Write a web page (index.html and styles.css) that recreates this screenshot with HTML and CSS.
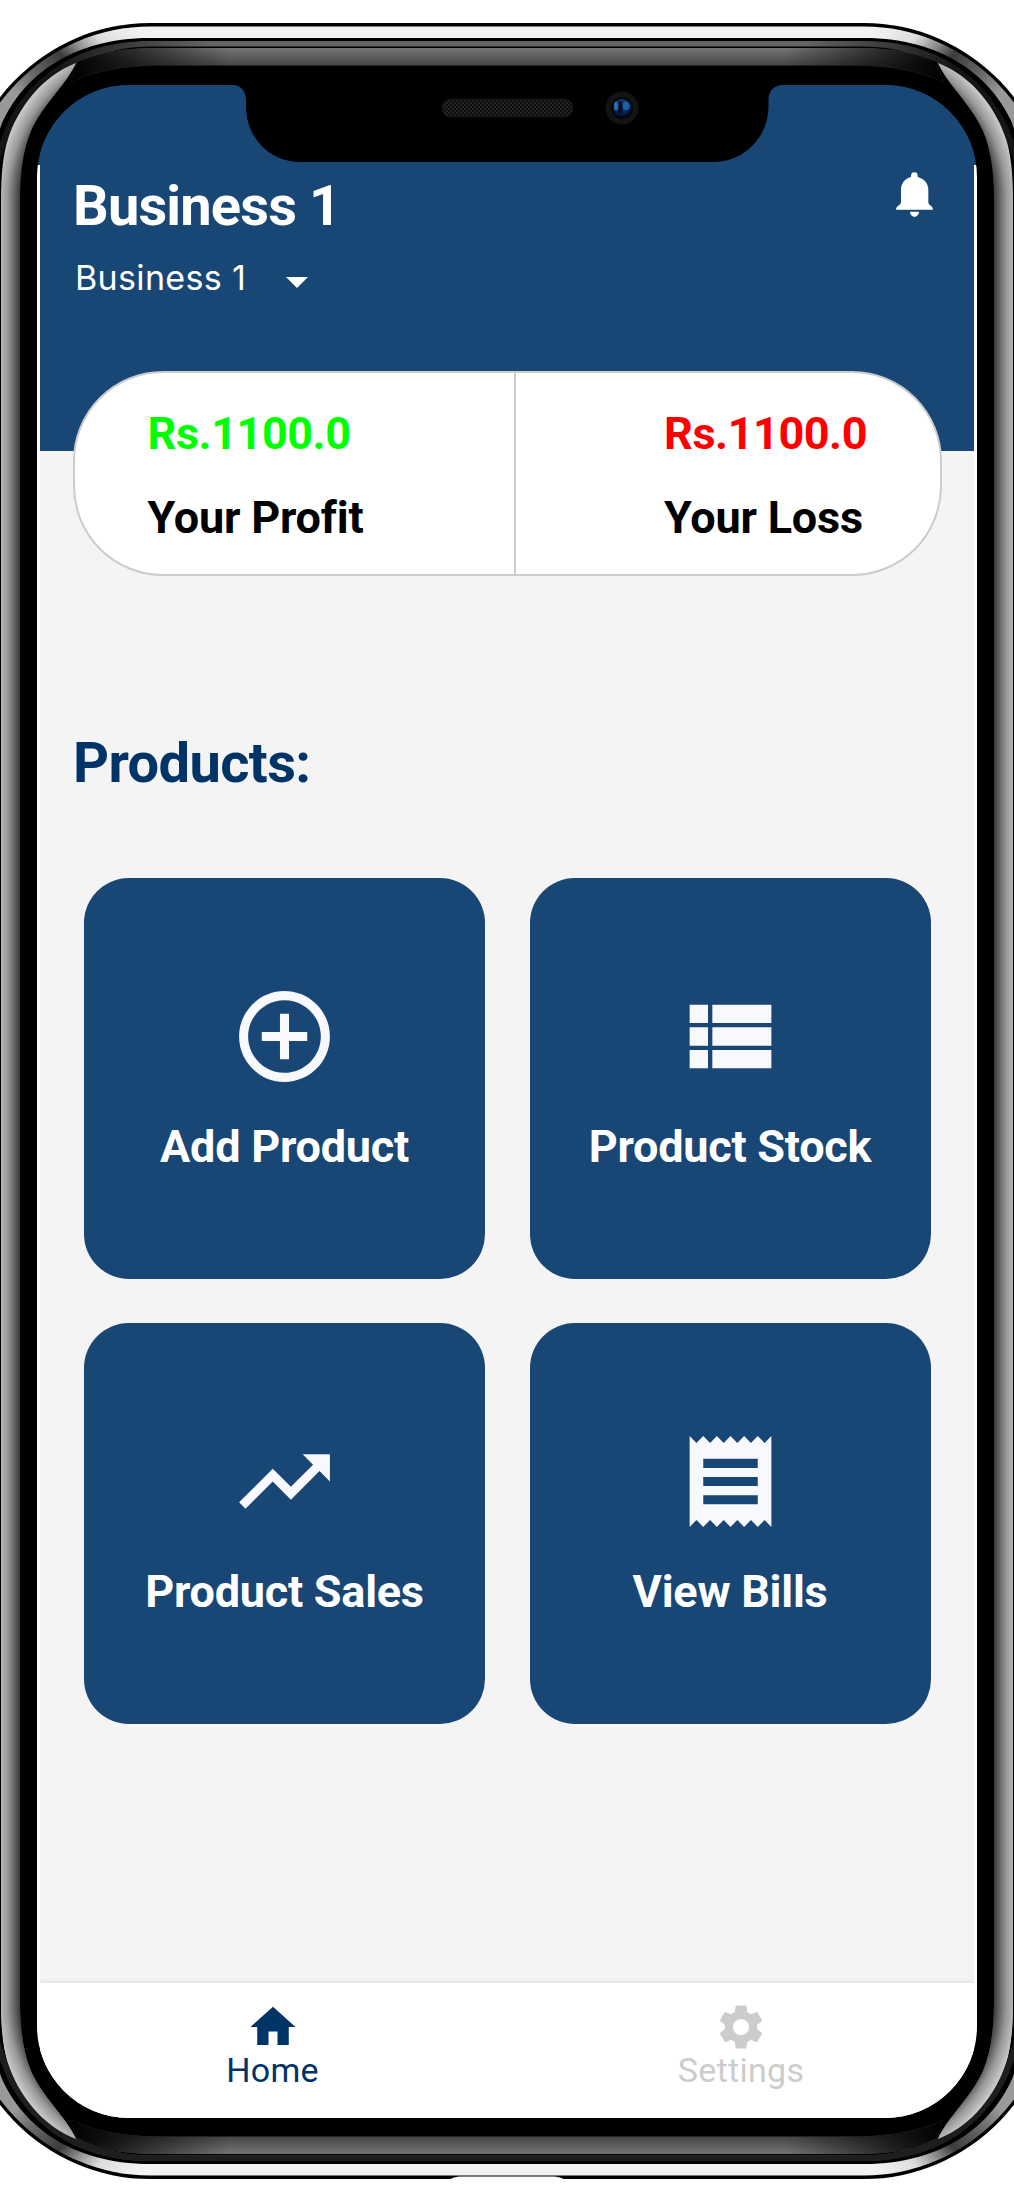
FILE: index.html
```html
<!DOCTYPE html>
<html lang="en">
<head>
<meta charset="utf-8">
<title>Business 1</title>
<link rel="stylesheet" href="styles.css">
</head>
<body>
<div class="phone">
  <svg class="frame" viewBox="0 0 1014 2203" aria-hidden="true">
    <defs>
      <linearGradient id="silver" x1="130" y1="23" x2="30" y2="110" gradientUnits="userSpaceOnUse">
        <stop offset="0" stop-color="#f2f2f2"/><stop offset=".25" stop-color="#ddd"/><stop offset=".42" stop-color="#888"/><stop offset=".55" stop-color="#3c3c3c"/><stop offset=".8" stop-color="#666"/><stop offset="1" stop-color="#999"/>
      </linearGradient>
      <linearGradient id="bezel" x1="0" y1="48" x2="0" y2="66" gradientUnits="userSpaceOnUse">
        <stop offset="0" stop-color="#757575"/><stop offset="1" stop-color="#444"/>
      </linearGradient>
      <linearGradient id="bezelFade" x1="70" y1="0" x2="230" y2="0" gradientUnits="userSpaceOnUse">
        <stop offset="0" stop-color="#000"/><stop offset="1" stop-color="#000" stop-opacity="0"/>
      </linearGradient>
      <linearGradient id="rimTop" x1="60" y1="0" x2="210" y2="0" gradientUnits="userSpaceOnUse">
        <stop offset="0" stop-color="#151515"/><stop offset=".4" stop-color="#383838"/><stop offset="1" stop-color="#646464"/>
      </linearGradient>
      <linearGradient id="side" x1="-5" y1="0" x2="20" y2="0" gradientUnits="userSpaceOnUse">
        <stop offset="0" stop-color="#d0d0d0"/><stop offset=".5" stop-color="#999"/><stop offset="1" stop-color="#3a3a3a"/>
      </linearGradient>
      <radialGradient id="shine" cx="165" cy="200" r="170" gradientUnits="userSpaceOnUse">
        <stop offset=".853" stop-color="#3a3a3a"/><stop offset=".927" stop-color="#999"/><stop offset="1" stop-color="#d0d0d0"/>
      </radialGradient>
      <path id="rimBand" d="M507 41H150C74 41 27 80 6 127L0 142V160L8 139C35 80 90 46.500 150 46.500H507z"/>
      <path id="sideShine" d="M76 63C42 76 18 108 8 139Q1 160 1 200.500H20Q20 157 31 131C43 104 67 84 76 63z"/>
      <g id="corner">
        <path fill="#000" d="M507 23H150A193 200 0 0 0-43 223V1102H507z"/>
        <path fill="url(#silver)" d="M507 26.500H150A190 197 0 0 0-40 223V1102H507z"/>
        <path fill="#000" d="M507 38H150C70 38 22 78 2 123Q-8 150-8 190V1102H507z"/>
        <use href="#rimBand" fill="url(#rimTop)"/>
        <path fill="url(#bezel)" d="M507 48H150Q106 49 77 62L71 82Q105 66 160 65.500H507z"/>
        <path fill="url(#bezelFade)" d="M507 48H150Q106 49 77 62L71 82Q105 66 160 65.500H507z"/>
        <path fill="url(#side)" d="M1 200H20V1102H1z"/>
        <use href="#sideShine" fill="url(#shine)"/>
      </g>
      <g id="cornerLow">
        <use href="#corner"/>
        <use href="#rimBand" fill="#1e1e1e"/>
        <use href="#sideShine" fill="url(#shine)"/>
      </g>
    </defs>
    <rect width="1014" height="2203" fill="#fff"/>
    <g><use href="#corner"/><use href="#corner" transform="matrix(-1 0 0 1 1014 0)"/></g>
    <g transform="matrix(1 0 0 -1 0 2202)"><use href="#cornerLow"/><use href="#cornerLow" transform="matrix(-1 0 0 1 1014 0)"/></g>
    <path fill="#fff" d="M448 2180q6-3.500 12-3.500h94q6 0 12 3.500z"/>
    <path stroke="#777" stroke-width="1.500" d="M457 2175.700h100"/>
  </svg>

  <main class="screen">
    <header class="header">
      <div>
        <h1 class="title">Business 1</h1>
        <div class="picker"><span>Business 1</span><svg class="caret" viewBox="0 0 22 11"><path d="M0 0h22L11 11z"/></svg></div>
      </div>
      <svg class="bell" viewBox="665 514 111 134"><path d="M710 524a10 10 0 0 1 20 0v4.500c19 4 32 19 32 39V604q0 6 6 10c5 3 8 7 8 13H665c0-6 3-10 8-13q7-4 7-10V567.500c0-20 12-35 30-39zM707 633h27c0 8-6 15-13.500 15S707 641 707 633z"/></svg>
    </header>

    <section class="summary">
      <div class="amount"><span class="profit">Rs.1100.0</span><span>Your Profit</span></div>
      <div class="amount loss-side"><span class="loss">Rs.1100.0</span><span>Your Loss</span></div>
    </section>

    <h2 class="section-title">Products:</h2>

    <section class="tiles">
      <div class="tile">
        <svg viewBox="0 0 24 24"><path d="M13 7h-2v4H7v2h4v4h2v-4h4v-2h-4V7zm-1-5C6.480 2 2 6.480 2 12s4.480 10 10 10 10-4.480 10-10S17.520 2 12 2zm0 18c-4.410 0-8-3.590-8-8s3.590-8 8-8 8 3.590 8 8-3.590 8-8 8z"/></svg>
        <span>Add Product</span>
      </div>
      <div class="tile">
        <svg viewBox="0 0 24 24"><path d="M3 5h4.050v4.050H3zM8 5h13v4.050H8zM3 9.970h4.050v4.050H3zM8 9.970h13v4.050H8zM3 14.950h4.050V19H3zM8 14.950h13V19H8z"/></svg>
        <span>Product Stock</span>
      </div>
      <div class="tile">
        <svg viewBox="0 0 24 24"><path d="M16 6l2.290 2.290-4.880 4.880-4-4L2 16.590 3.410 18l6-6 4 4 6.300-6.290L22 12V6z"/></svg>
        <span>Product Sales</span>
      </div>
      <div class="tile">
        <svg viewBox="0 0 24 24"><path d="M18 17H6v-2h12v2zm0-4H6v-2h12v2zm0-4H6V7h12v2zM3 22l1.500-1.500L6 22l1.500-1.500L9 22l1.500-1.500L12 22l1.500-1.500L15 22l1.500-1.500L18 22l1.500-1.500L21 22V2l-1.500 1.500L18 2l-1.500 1.500L15 2l-1.500 1.500L12 2l-1.500 1.500L9 2 7.500 3.500 6 2 4.500 3.500 3 2v20z"/></svg>
        <span>View Bills</span>
      </div>
    </section>

    <nav class="tabs">
      <a class="tab active"><svg viewBox="0 0 24 24"><path d="M10 20v-6h4v6h5v-8h3L12 3 2 12h3v8z"/></svg><span>Home</span></a>
      <a class="tab"><svg viewBox="0 0 24 24"><path d="M19.140 12.940c.04-.3.06-.61.06-.94 0-.32-.02-.64-.07-.94l2.030-1.580c.18-.14.23-.41.12-.61l-1.920-3.320c-.12-.22-.37-.29-.59-.22l-2.390.96c-.5-.38-1.030-.7-1.620-.94l-.36-2.540c-.04-.24-.24-.41-.48-.41h-3.840c-.24 0-.43.17-.47.41l-.36 2.540c-.59.24-1.130.57-1.620.94l-2.390-.96c-.22-.08-.47 0-.59.22L2.740 8.870c-.12.21-.08.47.12.61l2.030 1.580c-.05.3-.09.63-.09.94s.02.64.07.94l-2.030 1.580c-.18.14-.23.41-.12.61l1.920 3.320c.12.22.37.29.59.22l2.390-.96c.5.38 1.030.7 1.620.94l.36 2.540c.05.24.24.41.48.41h3.840c.24 0 .44-.17.47-.41l.36-2.540c.59-.24 1.130-.56 1.620-.94l2.390.96c.22.08.47 0 .59-.22l1.920-3.320c.12-.22.07-.47-.12-.61l-2.010-1.580zM12 15.600c-1.980 0-3.600-1.620-3.600-3.600s1.620-3.600 3.600-3.600 3.600 1.620 3.600 3.600-1.620 3.600-3.600 3.600z"/></svg><span>Settings</span></a>
    </nav>
  </main>

  <svg class="notch" viewBox="0 0 1014 180" aria-hidden="true">
    <defs>
      <pattern id="mesh" width="4" height="4" patternUnits="userSpaceOnUse"><rect width="4" height="4" fill="#0c0c0c"/><path fill="#242424" d="M0 0h2v2H0zM2 2h2v2H2z"/></pattern>
      <radialGradient id="lens" cx=".5" cy=".25" r=".75"><stop offset="0" stop-color="#154a8a"/><stop offset=".6" stop-color="#0b2858"/><stop offset="1" stop-color="#030a20"/></radialGradient>
    </defs>
    <path d="M230 84.500H232Q246 86 246 101V106C246 137 269 162 300 162H714C744 162 768.500 137 768.500 106V99Q769 86 784 84.500z"/>
    <rect x="442" y="99" width="131" height="18" rx="9" fill="url(#mesh)" stroke="#151515"/>
    <circle cx="622" cy="108" r="16.500" fill="#121315"/>
    <circle cx="622" cy="108" r="11" fill="#050608"/>
    <circle cx="622" cy="108" r="9" fill="url(#lens)"/>
    <ellipse cx="616" cy="106" rx="2" ry="4.500" fill="#2670ae"/>
    <ellipse cx="626" cy="106" rx="3.500" ry="4" fill="#1c62a8"/>
    <rect x="618.500" y="101" width="4" height="13" rx="2" fill="#06102c"/>
  </svg>
</div>
</body>
</html>
```
FILE: styles.css
```css
* { box-sizing: border-box; }
body { margin: 0; background: #fff; font-family: Roboto, sans-serif; }
svg { display: block; }

.phone { position: relative; width: 1014px; height: 2203px; padding: 85px 37px; overflow: hidden; }
.frame, .notch { position: absolute; left: 0; top: 0; width: 1014px; }
.frame { height: 2203px; }
.notch { height: 180px; }

.screen {
  position: relative; display: flex; flex-direction: column;
  width: 940px; height: 2033px; padding: 0 3px;
  border-radius: 92px; overflow: hidden;
  background:
    linear-gradient(#184675, #184675) 0 0 / 100% 80px no-repeat,
    linear-gradient(#f4f4f4, #f4f4f4) 3px 0 / 934px 100% no-repeat,
    #fff;
}
.header {
  display: flex; justify-content: space-between; flex: none;
  height: 366px; padding: 86px 41px 0 33px;
  background: #184675; color: #fff;
}
.title { margin: 2px 0 0; font-size: 56px; line-height: 66px; font-weight: 700; letter-spacing: -.85px; }
.picker { display: flex; align-items: center; margin-top: 15px; padding-left: 2px; font: 400 34px/48px Inter, sans-serif; letter-spacing: .35px; }
.caret { width: 22px; height: 11px; margin: 8px 0 0 39.5px; fill: #fff; }
.bell { width: 37px; height: 45px; margin-top: 1px; fill: #fff; }

.summary {
  display: grid; grid-template-columns: 441px 1fr; flex: none;
  height: 205px; margin: -80px 32.5px 0 32.5px;
  border: 2px solid #ccc; border-radius: 90px; overflow: hidden; background: #fff;
}
.amount {
  display: flex; flex-direction: column; gap: 31px;
  padding: 34px 0 0 73px; border-right: 2px solid #ccc;
  font-size: 45px; line-height: 53px; font-weight: 700; letter-spacing: -.2px; color: #000;
}
.loss-side { padding-left: 148.5px; border: 0; }
.profit, .loss { letter-spacing: -.45px; }
.profit { color: #0f0; }
.loss { color: #f00; }

.section-title { flex: none; margin: 0; padding: 154px 0 0 33px; height: 302px; font-size: 56px; line-height: 66px; letter-spacing: -.6px; color: #036; }

.tiles {
  display: grid; grid-template-columns: 401px 401px; grid-auto-rows: 401px;
  gap: 44px 44.5px; padding: 0 0 0 44px; flex: 1; align-content: start;
  box-shadow: inset 0 -4px 4px -3px #ddd;
}
.tile {
  display: flex; flex-direction: column; align-items: center;
  padding-top: 104px; border-radius: 45px;
  background: #184675; color: #fff;
  font-size: 45px; line-height: 53px; font-weight: 700; letter-spacing: -.25px;
}
.tile svg { width: 109px; height: 109px; margin-bottom: 29px; fill: #f8f8ff; }

.tabs { display: grid; grid-template-columns: 465px 469px; height: 135px; flex: none; background: #fff; }
.tab { display: flex; flex-direction: column; align-items: center; padding-top: 17px; color: #ccc; font-size: 34px; line-height: 40px; letter-spacing: .3px; }
.tab + .tab { padding-left: 3px; }
.tab svg { width: 54px; height: 54px; margin-bottom: -4px; fill: currentColor; }
.tab.active { color: #036; }
```
